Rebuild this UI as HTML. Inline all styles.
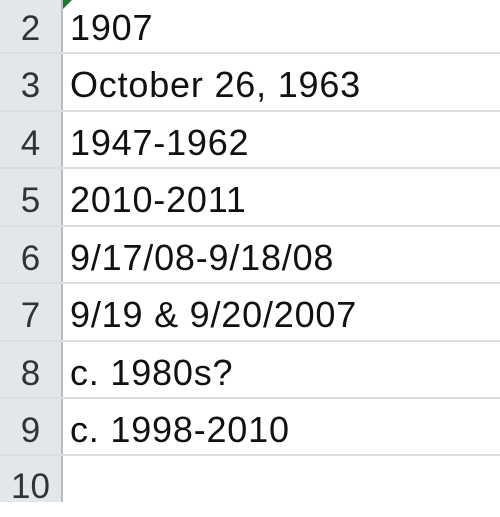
<!DOCTYPE html>
<html><head><style>
body{margin:0;width:500px;height:517px;background:#fff;overflow:hidden;position:relative;font-family:"Liberation Sans",sans-serif;}
.hdr{position:absolute;left:0;top:0;width:61px;height:502px;background:#e3e6eb;border-right:2px solid #b9bcc1;}
.row{position:absolute;left:0;width:500px;height:57px;}
.row .n{position:absolute;left:0;width:61px;text-align:center;font-size:35px;color:#333;top:13px;}
.row .t{position:absolute;left:70px;font-size:36px;color:#111;top:11px;letter-spacing:0.8px;}
.line{position:absolute;left:0;width:500px;height:2px;background:#dcdde0;}
</style></head><body>
<div class="hdr"></div>
<div style="position:absolute;left:63px;top:0;width:0;height:0;border-top:9px solid #1e7a2e;border-right:9px solid transparent;"></div>
<div class="row" style="top:-4px"><span class="n">2</span><span class="t">1907</span></div>
<div class="row" style="top:53px"><span class="n">3</span><span class="t">October 26, 1963</span></div>
<div class="row" style="top:111px"><span class="n">4</span><span class="t">1947-1962</span></div>
<div class="row" style="top:168px"><span class="n">5</span><span class="t">2010-2011</span></div>
<div class="row" style="top:226px"><span class="n">6</span><span class="t">9/17/08-9/18/08</span></div>
<div class="row" style="top:283px"><span class="n">7</span><span class="t">9/19 &amp; 9/20/2007</span></div>
<div class="row" style="top:341px"><span class="n">8</span><span class="t">c. 1980s?</span></div>
<div class="row" style="top:398px"><span class="n">9</span><span class="t">c. 1998-2010</span></div>
<div class="row" style="top:455px"><span class="n" style="top:12px">10</span></div>
<div class="line" style="top:52px"></div>
<div class="line" style="top:110px"></div>
<div class="line" style="top:167px"></div>
<div class="line" style="top:225px"></div>
<div class="line" style="top:282px"></div>
<div class="line" style="top:340px"></div>
<div class="line" style="top:397px"></div>
<div class="line" style="top:454px"></div>
</body></html>
